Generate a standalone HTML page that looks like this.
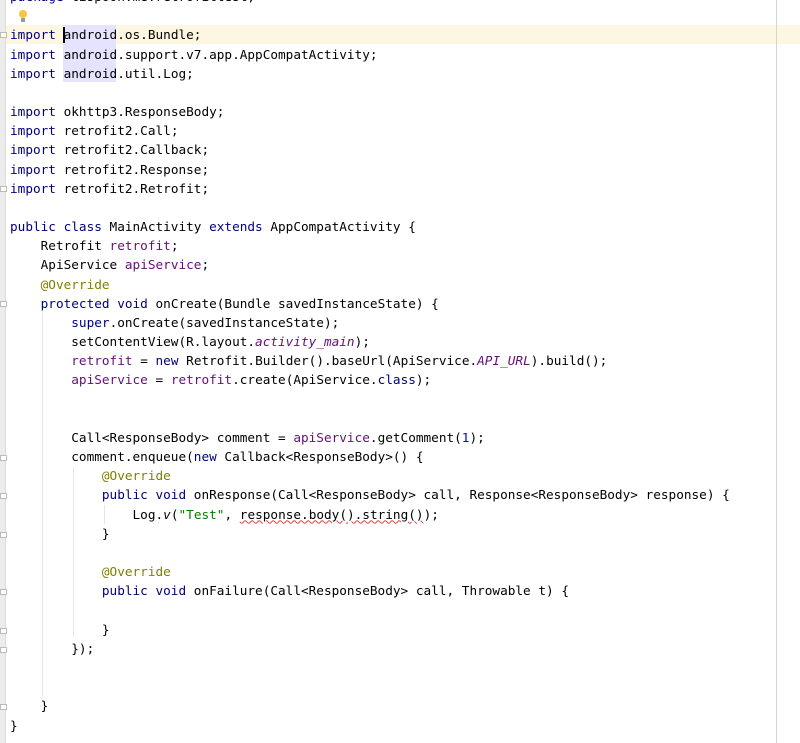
<!DOCTYPE html>
<html><head><meta charset="utf-8"><style>
html,body{margin:0;padding:0;background:#fff;width:800px;height:743px;overflow:hidden;position:relative}
.gut{position:absolute;left:0;top:0;width:5px;height:743px;background:#ececec;border-right:1px solid #dcdcdc}
.margin{position:absolute;left:776px;top:0;width:1px;height:743px;background:#d4d4d4}
.hl{position:absolute;left:6px;top:25px;width:794px;height:19px;background:#fdf7e2}
.sel{position:absolute;left:63px;width:53px;height:19px;background:#e4e4ff}
.guide{position:absolute;width:1px;background:#e6e6e6}
pre{position:absolute;left:10px;top:-13px;margin:0;font-family:"DejaVu Sans Mono","Liberation Mono",monospace;font-size:12.72px;line-height:19.17px;color:#000}
.k{color:#000080}
.f{color:#660e7a}
.a{color:#808000}
.s{color:#008000}
.n{color:#0000ff}
.i{font-style:italic}
.w{text-decoration:underline wavy #e04040;text-decoration-thickness:1px}
.fold{position:absolute;left:0;width:7px;height:6px;border:1px solid #bbb;background:#fff;box-sizing:border-box}
.caret{position:absolute;left:63px;top:27px;width:2px;height:16px;background:#000}
.bulb{position:absolute;left:19px;top:10px;width:8px;height:8px;border-radius:50%;background:#f5c542}
.bulbb{position:absolute;left:21px;top:18px;width:4px;height:4px;background:#999}
</style></head><body>
<div class="gut"></div>
<div class="hl"></div>
<div class="sel" style="top:25px"></div>
<div class="sel" style="top:44px"></div>
<div class="sel" style="top:63px"></div>
<div class="margin"></div>
<div class="guide" style="left:42px;top:313px;height:383px"></div>
<div class="guide" style="left:73px;top:467px;height:170px"></div>
<div class="guide" style="left:104px;top:505px;height:19px"></div>
<div class="bulb"></div><div class="bulbb"></div>
<div class="fold" style="top:32px"></div>
<div class="fold" style="top:186px"></div>
<div class="fold" style="top:301px"></div>
<div class="fold" style="top:455px"></div>
<div class="fold" style="top:493px"></div>
<div class="fold" style="top:532px"></div>
<div class="fold" style="top:589px"></div>
<div class="fold" style="top:628px"></div>
<div class="fold" style="top:647px"></div>
<div class="fold" style="top:704px"></div>
<pre><span class="k">package</span> tispoon.me.retrofittest;

<span class="k">import</span> android.os.Bundle;
<span class="k">import</span> android.support.v7.app.AppCompatActivity;
<span class="k">import</span> android.util.Log;

<span class="k">import</span> okhttp3.ResponseBody;
<span class="k">import</span> retrofit2.Call;
<span class="k">import</span> retrofit2.Callback;
<span class="k">import</span> retrofit2.Response;
<span class="k">import</span> retrofit2.Retrofit;

<span class="k">public class</span> MainActivity <span class="k">extends</span> AppCompatActivity {
    Retrofit <span class="f">retrofit</span>;
    ApiService <span class="f">apiService</span>;
    <span class="a">@Override</span>
    <span class="k">protected void</span> onCreate(Bundle savedInstanceState) {
        <span class="k">super</span>.onCreate(savedInstanceState);
        setContentView(R.layout.<span class="f i">activity_main</span>);
        <span class="f">retrofit</span> = <span class="k">new</span> Retrofit.Builder().baseUrl(ApiService.<span class="f i">API_URL</span>).build();
        <span class="f">apiService</span> = <span class="f">retrofit</span>.create(ApiService.<span class="k">class</span>);


        Call&lt;ResponseBody&gt; comment = <span class="f">apiService</span>.getComment(<span class="n">1</span>);
        comment.enqueue(<span class="k">new</span> Callback&lt;ResponseBody&gt;() {
            <span class="a">@Override</span>
            <span class="k">public void</span> onResponse(Call&lt;ResponseBody&gt; call, Response&lt;ResponseBody&gt; response) {
                Log.<span class="i">v</span>(<span class="s">"Test"</span>, <span class="w">response.body().string()</span>);
            }

            <span class="a">@Override</span>
            <span class="k">public void</span> onFailure(Call&lt;ResponseBody&gt; call, Throwable t) {

            }
        });


    }
}</pre>
<div class="caret"></div>
</body></html>
